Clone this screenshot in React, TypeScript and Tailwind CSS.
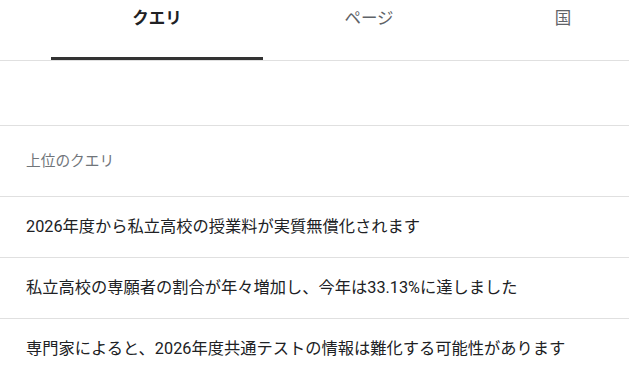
const tabs = [
  { label: "クエリ", width: "w-[212px]", active: true },
  { label: "ページ", width: "w-[212px]", active: false },
  { label: "国", width: "w-[176px]", active: false },
];

const queries = [
  "2026年度から私立高校の授業料が実質無償化されます",
  "私立高校の専願者の割合が年々増加し、今年は33.13%に達しました",
  "専門家によると、2026年度共通テストの情報は難化する可能性があります",
];

export default function App() {
  return (
    <div
      className="w-[629px] h-[375px] overflow-hidden bg-white text-[#202124]"
      style={{ fontFamily: 'Roboto, "Noto Sans CJK JP", sans-serif' }}
    >
      {/* tabs */}
      <div className="flex h-[61px] border-b border-[#e0e0e0] pl-[51px] overflow-hidden">
        {tabs.map(t => (
          <div
            key={t.label}
            className={`relative shrink-0 ${t.width} flex justify-center pt-[7px] text-[16.5px] ${
              t.active ? "font-bold text-[#202124]" : "text-[#5f6368]"
            }`}
          >
            {t.label}
            {t.active && <div className="absolute left-0 right-0 bottom-0 h-[3px] bg-[#333333]" />}
          </div>
        ))}
      </div>

      <div className="h-[65px] border-b border-[#e0e0e0]" />

      <div className="h-[71px] flex items-center px-[26px] border-b border-[#e0e0e0] text-[14.7px] text-[#70757a]">
        上位のクエリ
      </div>

      {queries.map(q => (
        <div key={q} className="h-[61px] flex items-center px-[26px] border-b border-[#e0e0e0] text-[16.25px]">
          {q}
        </div>
      ))}
    </div>
  );
}
